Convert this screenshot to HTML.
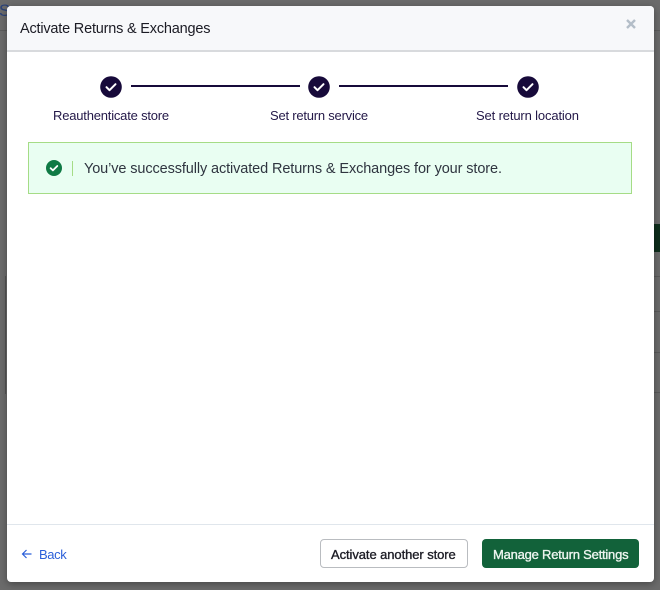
<!DOCTYPE html>
<html><head><meta charset="utf-8"><style>
html,body{margin:0;padding:0;width:660px;height:590px;overflow:hidden;background:#6b6b6b;font-family:"Liberation Sans",sans-serif}
.a{position:absolute;white-space:nowrap}
.lbl{font-size:13px;color:#231848;top:107.5px;line-height:16px}
.ln{height:2px;background:#170a3a;top:85px}
</style></head><body>
<div class="a" style="left:0;top:30px;width:660px;height:1px;background:#5c5c5c"></div>
<div class="a" style="left:-1px;top:1px;font-size:17px;color:#2b4278">S</div>
<div class="a" style="left:654px;top:224px;width:6px;height:28px;background:#0e2e1c"></div>
<div class="a" style="left:654px;top:276px;width:6px;height:1px;background:#5a5a5a"></div>
<div class="a" style="left:654px;top:311px;width:6px;height:1px;background:#5a5a5a"></div>
<div class="a" style="left:654px;top:352px;width:6px;height:1px;background:#5a5a5a"></div>
<div class="a" style="left:654px;top:392px;width:6px;height:1px;background:#5a5a5a"></div>
<div class="a" style="left:5px;top:276px;width:1px;height:118px;background:#555"></div>
<div class="a" style="left:7px;top:6px;width:646.5px;height:576px;background:#fff;border-radius:4px;box-shadow:0 2px 8px rgba(0,0,0,.35);overflow:hidden">
  <div class="a" style="left:0;top:0;width:100%;height:44px;background:#f7f8fa;border-bottom:2px solid #d8dadd"></div>
  <div class="a" style="left:0;top:518px;width:100%;height:1px;background:#e0e6ec"></div>
</div>
<div class="a" style="left:20px;top:20px;font-size:14.5px;line-height:18px;color:#1b1b24;letter-spacing:-.2px">Activate Returns &amp; Exchanges</div>
<svg class="a" style="left:625px;top:18px" width="12" height="12" viewBox="0 0 12 12"><path d="M2 2L10 10M10 2L2 10" stroke="#b4bec8" stroke-width="2.4"/></svg>

<svg class="a" style="left:100px;top:76px" width="22" height="22" viewBox="0 0 22 22"><circle cx="11" cy="11" r="10.8" fill="#170a3a"/><path d="M6.5 11.2l3 3 6-6" fill="none" stroke="#fff" stroke-width="2" stroke-linecap="round" stroke-linejoin="round"/></svg>
<svg class="a" style="left:308px;top:76px" width="22" height="22" viewBox="0 0 22 22"><circle cx="11" cy="11" r="10.8" fill="#170a3a"/><path d="M6.5 11.2l3 3 6-6" fill="none" stroke="#fff" stroke-width="2" stroke-linecap="round" stroke-linejoin="round"/></svg>
<svg class="a" style="left:517px;top:76px" width="22" height="22" viewBox="0 0 22 22"><circle cx="11" cy="11" r="10.8" fill="#170a3a"/><path d="M6.5 11.2l3 3 6-6" fill="none" stroke="#fff" stroke-width="2" stroke-linecap="round" stroke-linejoin="round"/></svg>
<div class="a ln" style="left:131px;width:169px"></div>
<div class="a ln" style="left:339px;width:169px"></div>
<div class="a lbl" style="left:53px;letter-spacing:-.2px">Reauthenticate store</div>
<div class="a lbl" style="left:270px;letter-spacing:-.22px">Set return service</div>
<div class="a lbl" style="left:476px;letter-spacing:-.14px">Set return location</div>

<div class="a" style="left:28px;top:142px;width:602px;height:50px;background:#e9fef2;border:1px solid #a5dc86"></div>
<svg class="a" style="left:46px;top:160px" width="16" height="16" viewBox="0 0 16 16"><circle cx="8" cy="8" r="8" fill="#0f7a45"/><path d="M4.6 8.2l2.3 2.2 4.4-4.4" fill="none" stroke="#fff" stroke-width="1.8" stroke-linecap="round" stroke-linejoin="round"/></svg>
<div class="a" style="left:72px;top:161px;width:1px;height:15px;background:#a5dc86"></div>
<div class="a" style="left:84px;top:160px;font-size:14.5px;line-height:18px;color:#2f3540;letter-spacing:-.11px">You’ve successfully activated Returns &amp; Exchanges for your store.</div>

<svg class="a" style="left:21px;top:548px" width="12" height="12" viewBox="0 0 12 12"><path d="M10.5 6H1.5M5.5 2L1.5 6l4 4" fill="none" stroke="#2b5fd9" stroke-width="1.2"/></svg>
<div class="a" style="left:39px;top:546.5px;font-size:13px;line-height:16px;color:#2b5fd9;letter-spacing:-.4px">Back</div>

<div class="a" style="left:320px;top:539px;width:146px;height:27px;background:#fff;border:1px solid #b9bcc0;border-radius:4px"></div>
<div class="a" style="left:331px;top:546.5px;font-size:13px;line-height:16px;color:#1d1d26;-webkit-text-stroke:.35px #1d1d26;letter-spacing:-.08px">Activate another store</div>
<div class="a" style="left:482px;top:539px;width:157px;height:29px;background:#12623a;border-radius:4px"></div>
<div class="a" style="left:493px;top:546.5px;font-size:13px;line-height:16px;color:#eef5f0;-webkit-text-stroke:.35px #eef5f0;letter-spacing:-.22px">Manage Return Settings</div>
</body></html>
